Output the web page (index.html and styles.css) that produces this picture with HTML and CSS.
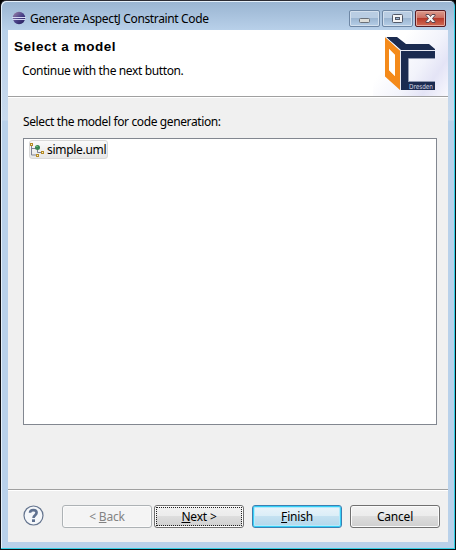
FILE: index.html
```html
<!DOCTYPE html>
<html lang="en">
<head>
<meta charset="utf-8">
<title>Generate AspectJ Constraint Code</title>
<link rel="stylesheet" href="styles.css">
</head>
<body>
<div class="window">
  <div class="titlebar">
    <svg class="app-icon" width="14" height="14" viewBox="0 0 14 14">
      <defs><linearGradient id="orb" x1="0" y1="0" x2="1" y2="1"><stop offset="0" stop-color="#a287a9"/><stop offset=".5" stop-color="#4b438a"/><stop offset="1" stop-color="#211955"/></linearGradient></defs>
      <circle cx="7" cy="7" r="6.200" fill="url(#orb)"/>
      <path d="M0 6.500h14M.5 8.500h13" stroke="#d4d8f3"/>
    </svg>
    <span class="title">Generate AspectJ Constraint Code</span>
    <div class="controls">
      <span class="control"><svg width="29" height="15" viewBox="0 0 29 15"><rect x="9.500" y="7.500" width="10" height="4" rx="1" fill="#deded9" stroke="#6a7078"/></svg></span>
      <span class="control"><svg width="29" height="15" viewBox="0 0 29 15"><rect x="9.500" y="3.500" width="10" height="8" rx="1" fill="#f4f4f5" stroke="#525968"/><rect x="12.500" y="6.500" width="4" height="2" fill="#9bb3d2" stroke="#525968"/></svg></span>
      <span class="control close"><svg width="29" height="15" viewBox="0 0 29 15"><path d="M10 3.500h3l1.500 2 1.500-2h3v1l-2.500 3 2.500 3v1h-3l-1.500-2-1.500 2h-3v-1l2.500-3-2.500-3z" fill="#f5f3f3" stroke="#5b4650"/></svg></span>
    </div>
  </div>
  <div class="client">
    <header class="banner">
      <div>
        <h1 class="heading">Select a model</h1>
        <p class="message">Continue with the next button.</p>
      </div>
      <div class="art">
        <svg width="75" height="66" viewBox="0 0 75 66">
          <path d="M13 7h11l9 7h23l6 5v1H28z" fill="#1b2b50"/>
          <path d="M28 21h34v7H36v24h26v8H28z" fill="#1b2b50"/>
          <path d="M12 7L27 20.500V60L12 46.500zM16 19v21l6 6V25z" fill="#f48a1a" fill-rule="evenodd"/>
          <path d="M16 19l6 6v21l-6-6z" fill="#fff"/>
          <path d="M12.500 7L27.500 20.500V60M27.500 20.500H62" fill="none" stroke="#e9eaf2"/>
          <path d="M35.500 52V28.500H62M35.500 51.500H62" fill="none" stroke="#929bb2"/>
          <text class="logo-text" x="36" y="58.500" textLength="24" lengthAdjust="spacingAndGlyphs">Dresden</text>
        </svg>
      </div>
    </header>
    <main class="content">
      <div class="label">Select the model for code generation:</div>
      <div class="list">
        <div class="item">
          <svg width="16" height="16" viewBox="0 0 16 16">
            <path d="M2.500 3v10H7M3 6.500h5M8.500 5v5.500H12" fill="none" stroke="#7c8193"/>
            <circle cx="8.500" cy="5.500" r="2.500" fill="#398653"/>
            <path d="M7 4.500h2" stroke="#5fb878"/>
            <g fill="#fff6b6" stroke="#b48a27"><rect x="1.500" y="1.500" width="2" height="2"/><rect x="12.500" y="9.500" width="2" height="2"/><rect x="7.500" y="12.500" width="2" height="2"/></g>
          </svg>
          <span class="filename">simple.uml</span>
        </div>
      </div>
    </main>
    <footer class="actions">
      <svg class="help" width="22" height="22" viewBox="0 0 22 22">
        <circle cx="10.500" cy="10.500" r="9.500" fill="#f5f7fa" stroke="#65758f" stroke-width="1.200"/>
        <path d="M7 7.800C7.200 4.200 13.600 4.200 13.600 7.800C13.600 10.200 10.500 10.200 10.500 13" fill="none" stroke="#5f7190" stroke-width="2.600"/>
        <rect x="9" y="14.300" width="3" height="2.700" fill="#5f7190"/>
      </svg>
      <button class="button back" disabled>&lt; <u>B</u>ack</button>
      <button class="button next"><u>N</u>ext &gt;</button>
      <button class="button finish"><u>F</u>inish</button>
      <button class="button cancel">Cancel</button>
    </footer>
  </div>
</div>
</body>
</html>
```

FILE: styles.css
```css
* { box-sizing: border-box; }
body { margin: 0; background: #000; font: 12px/16px "Noto Sans", sans-serif; color: #000; }
.window {
  width: 456px; height: 550px; padding: 0 7px 7px;
  border: 1px solid #101014; border-top-color: #2b2b33; border-radius: 6px 6px 0 0;
  background: linear-gradient(#99b4d1, #b9d1ea 30px, #c9daed 119px, #b9d1ea 120px);
  box-shadow: inset -1px -1px #31cfe4, inset 1px 1px #e5f0fa;
}
.titlebar { height: 29px; display: flex; align-items: flex-start; padding: 0 2px 0 4px; }
.app-icon { margin-top: 10px; }
.title { margin: 10px 0 0 4px; white-space: nowrap; letter-spacing: -.36px; }
.controls { display: flex; gap: 2px; margin: 9px 0 0 auto; }
.control {
  width: 31px; height: 17px; border: 1px solid #6e87a5; border-radius: 2px;
  background: linear-gradient(#b9cde3 50%, #9cb6d2 50%, #b5cee7);
  box-shadow: inset 0 0 0 1px #d3e0ee;
}
.control svg { display: block; }
.close { border-color: #571b22; background: linear-gradient(#dc9b8c, #ca6c60 48%, #b83a2b 50%, #d16c55); box-shadow: inset 0 0 0 1px #e5aaa0; }
.client { width: 440px; height: 512px; background: #f0f0f0; display: flex; flex-direction: column; }
.banner { height: 68px; border-bottom: 1px solid #fff; box-shadow: inset 0 -1px #a0a0a0; background: #fff; display: flex; justify-content: space-between; padding-left: 6px; }
.heading { margin: 8px 0 0; font: bold 13.5px/17px "Liberation Sans", sans-serif; letter-spacing: .54px; }
.message { margin: 8px 0 0 8px; letter-spacing: -.37px; }
.art { width: 75px; height: 66px; background: linear-gradient(125deg, #fff 30%, #f2f3fb 60%, #e4e4f6 78%, #f8f8fd); }
.art svg { display: block; }
.logo-text { font: 7px "DejaVu Sans", sans-serif; fill: #d6d9e4; }
.content { flex: 1; padding: 16px 11px 0 15px; }
.label { height: 24px; letter-spacing: -.38px; }
.list { height: 287px; border: 1px solid #828790; background: #fff; padding: 1px 5px; }
.item { width: 79px; height: 19px; border: 1px solid #d9d9d9; border-radius: 3px; background: linear-gradient(#fafafa, #e7e7e7); display: flex; align-items: center; }
.item svg { flex: none; margin-left: -1px; }
.filename { margin-left: 2px; white-space: nowrap; letter-spacing: -.3px; }
.actions { height: 53px; border-top: 1px solid #a0a0a0; box-shadow: inset 0 1px #fff; display: flex; align-items: flex-start; padding: 15px 8px 0 15px; }
.help { flex: none; }
.button {
  width: 90px; height: 23px; padding: 0; border: 1px solid #707070; border-radius: 3px;
  background: linear-gradient(#f2f2f2, #ebebeb 50%, #ddd 50%, #cfcfcf);
  box-shadow: inset 0 0 0 1px #fbfbfb; color: #000; font: 12px/20px "Noto Sans", sans-serif; letter-spacing: -.2px;
}
.button u { text-underline-offset: 1px; text-decoration-thickness: 1px; }
.back { margin-left: 17px; border-color: #adb2b5; background: #f4f4f4; color: #838383; }
.next { margin-left: 2px; position: relative; }
.next::after { content: ""; position: absolute; inset: 1px; border: 1px dotted #222; }
.finish { margin-left: 8px; border-color: #3c7fb1; background: linear-gradient(#eaf4fa, #daedf7 50%, #c4e1f1 50%, #b2d7eb); box-shadow: inset 0 0 0 1px #35d0f8, inset 0 0 0 2px #b4eafb; }
.cancel { margin-left: 8px; }
```
